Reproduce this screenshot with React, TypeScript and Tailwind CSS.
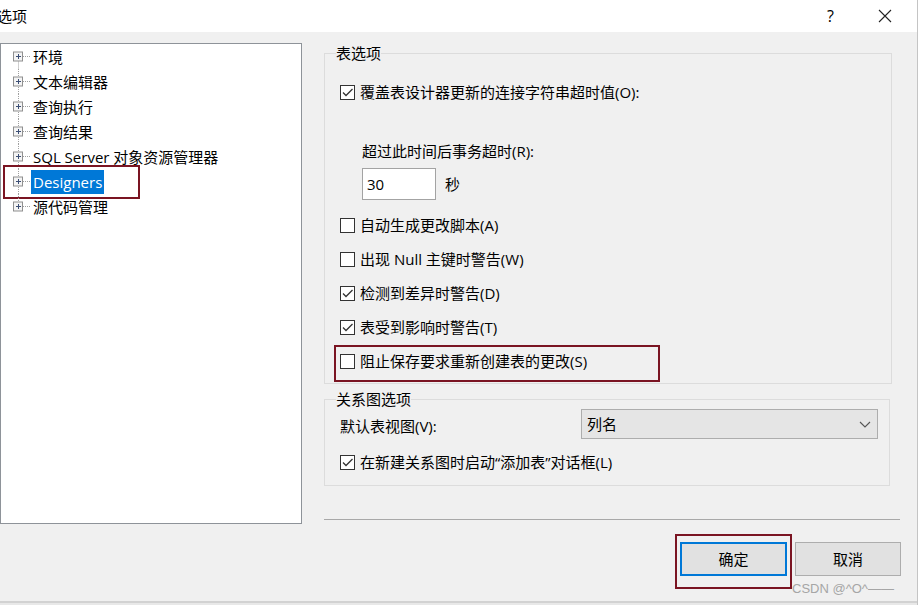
const treeItems = ["环境", "文本编辑器", "查询执行", "查询结果", "SQL Server 对象资源管理器", "Designers", "源代码管理"];

function PlusBox({ first, last }: { first: boolean; last: boolean }) {
  return (
    <svg width="30" height="25" className="shrink-0">
      <line x1="17.5" y1={first ? 12.5 : 0} x2="17.5" y2={last ? 12.5 : 25} stroke="#a0a0a0" strokeDasharray="1 1" />
      <line x1="22" y1="12.5" x2="30" y2="12.5" stroke="#a0a0a0" strokeDasharray="1 1" />
      <rect x="12.5" y="8" width="9" height="9" fill="#f4f4f4" stroke="#8f8f8f" />
      <line x1="15" y1="12.5" x2="20" y2="12.5" stroke="#3c4f75" />
      <line x1="17.5" y1="10" x2="17.5" y2="15" stroke="#3c4f75" />
    </svg>
  );
}

function Check({ checked, label }: { checked?: boolean; label: string }) {
  return (
    <div className="flex items-center h-5">
      <span className="w-[15px] h-[15px] border border-[#333333] bg-white flex items-center justify-center shrink-0">
        {checked && (
          <svg width="13" height="13" viewBox="0 0 13 13">
            <path d="M2 6.5 L5 9.5 L11.5 3" fill="none" stroke="#333333" strokeWidth="1.3" />
          </svg>
        )}
      </span>
      <span className="ml-[5px] whitespace-nowrap">{label}</span>
    </div>
  );
}

export default function App() {
  return (
    <div className="w-[918px] h-[605px] bg-white border-r border-[#c4c4c4] flex flex-col font-['Open_Sans','Noto_Sans_CJK_SC',sans-serif] text-[15px] leading-5 text-black">
      {/* title bar */}
      <div className="h-8 bg-white flex items-center shrink-0">
        <span className="-ml-[3px]">选项</span>
        <span className="ml-auto mr-[44px] text-[16px]">?</span>
        <svg width="14" height="14" className="mr-[25px]">
          <path d="M1 1 L13 13 M13 1 L1 13" stroke="#222" strokeWidth="1.1" />
        </svg>
      </div>

      {/* body */}
      <div className="h-[569px] bg-[#f0f0f0] flex relative">
        <div className="w-[302px] h-[481px] mt-[11px] bg-white border border-[#8e9399]">
          {treeItems.map((t, i) => (
            <div key={t} className="h-[25px] flex items-center relative">
              <PlusBox first={i === 0} last={i === treeItems.length - 1} />
              {t === "Designers" ? (
                <>
                  <span className="bg-[#0078d7] text-white h-6 px-[2px] flex items-center">{t}</span>
                  <div className="absolute left-[2px] top-[-4px] w-[137px] h-[34px] border-2 border-[#7a1422]" />
                </>
              ) : (
                <span className="pl-[2px] whitespace-nowrap">{t}</span>
              )}
            </div>
          ))}
        </div>

        <div className="ml-[22px] w-[577px] pt-[11px] flex flex-col">
          <fieldset className="w-[568px] border border-[#dcdcdc] pl-[15px] pb-[12px]">
            <legend className="-ml-[4px] px-0">表选项</legend>
            <div className="mt-[19px]">
              <Check checked label="覆盖表设计器更新的连接字符串超时值(O):" />
            </div>
            <div className="mt-[39px] pl-[22px]">超过此时间后事务超时(R):</div>
            <div className="mt-[7px] pl-[22px] flex items-center">
              <div className="w-[74px] h-8 bg-white border border-[#a3a3a3] flex items-center pl-[4px]">30</div>
              <span className="ml-[9px]">秒</span>
            </div>
            <div className="mt-[15px] flex flex-col gap-[14px]">
              <Check label="自动生成更改脚本(A)" />
              <Check label="出现 Null 主键时警告(W)" />
              <Check checked label="检测到差异时警告(D)" />
              <Check checked label="表受到影响时警告(T)" />
              <div className="relative">
                <Check label="阻止保存要求重新创建表的更改(S)" />
                <div className="absolute left-[-6px] top-[-6px] w-[326px] h-[37px] border-2 border-[#7a1422]" />
              </div>
            </div>
          </fieldset>

          <fieldset className="mt-[5px] w-[566px] border border-[#dcdcdc] pl-[15px] pr-[11px] pb-[13px]">
            <legend className="-ml-[4px] px-0">关系图选项</legend>
            <div className="flex items-center justify-between">
              <span className="mt-[4px]">默认表视图(V):</span>
              <div className="w-[297px] h-[30px] bg-[#e5e5e5] border border-[#adadad] flex items-center pl-[5px] pr-[6px]">
                <span>列名</span>
                <svg width="12" height="7" className="ml-auto">
                  <path d="M1 1 L6 6 L11 1" fill="none" stroke="#555" strokeWidth="1.1" />
                </svg>
              </div>
            </div>
            <div className="mt-[13px]">
              <Check checked label="在新建关系图时启动“添加表”对话框(L)" />
            </div>
          </fieldset>

          <div className="mt-[33px] h-px bg-[#a8a8a8] w-[576px]" />

          <div className="mt-[22px] flex justify-end gap-[8px] pr-0">
            <div className="relative">
              <button className="w-[107px] h-[34px] bg-[#e1e1e1] border-2 border-[#0078d7]">确定</button>
              <div className="absolute left-[-5px] top-[-8px] w-[117px] h-[55px] border-2 border-[#7a1422]" />
            </div>
            <button className="w-[106px] h-[34px] bg-[#e1e1e1] border border-[#adadad]">取消</button>
          </div>
        </div>

        <span className="absolute left-[792px] top-[549px] text-[13px] leading-4 text-[#a6a6a6] font-['Liberation_Sans',sans-serif] whitespace-nowrap">
          CSDN @^O^——
        </span>
      </div>
      <div className="h-[4px] border-t-2 border-[#d2d2d2] bg-[#e8e8e8]" />
    </div>
  );
}
